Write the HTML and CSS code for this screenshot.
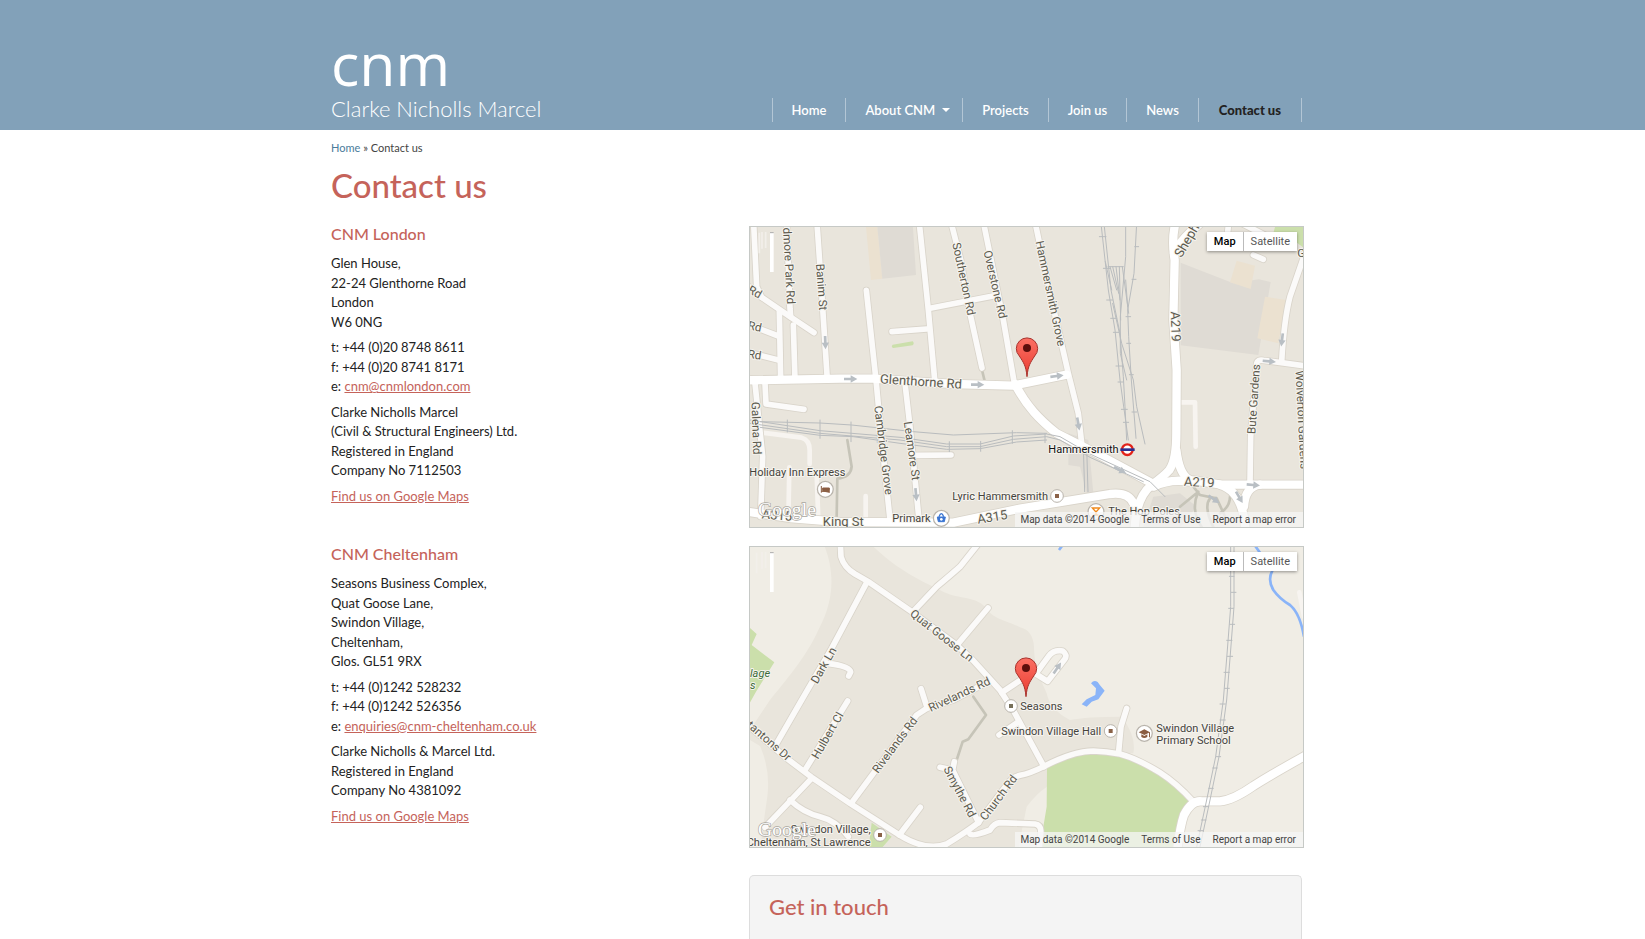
FILE: index.html
```html
<!DOCTYPE html>
<html lang="en">
<head>
<meta charset="utf-8">
<title>Contact us - Clarke Nicholls Marcel</title>
<link rel="stylesheet" href="styles.css">
</head>
<body>
<header class="site-header">
  <div class="container header-row">
    <a class="logo" href="#"><span class="logo-mark">cnm</span><span class="logo-name">Clarke Nicholls Marcel</span></a>
    <nav class="main-nav">
      <a href="#">Home</a>
      <a class="has-menu" href="#">About CNM</a>
      <a href="#">Projects</a>
      <a href="#">Join us</a>
      <a href="#">News</a>
      <a class="current" href="#">Contact us</a>
    </nav>
  </div>
</header>
<main class="container">
  <p class="breadcrumb"><a href="#">Home</a> » Contact us</p>
  <h1>Contact us</h1>

  <section class="office">
    <div class="office-details">
      <h2>CNM London</h2>
      <p>Glen House,<br>22-24 Glenthorne Road<br>London<br>W6 0NG</p>
      <p>t: +44 (0)20 8748 8611<br>f: +44 (0)20 8741 8171<br>e: <a href="#">cnm@cnmlondon.com</a></p>
      <p>Clarke Nicholls Marcel<br>(Civil &amp; Structural Engineers) Ltd.<br>Registered in England<br>Company No 7112503</p>
      <p><a href="#">Find us on Google Maps</a></p>
    </div>
    <div class="map">
      <svg class="map-canvas" viewBox="30 21 1659 900" preserveAspectRatio="xMidYMid slice">
        <defs>
          <linearGradient id="pin-fill" x1="0" y1="0" x2="0" y2="1"><stop offset="0" stop-color="#fb7064"/><stop offset="1" stop-color="#ea3c31"/></linearGradient>
          <g id="pin"><path d="M0,0C-3,-34-11,-43-23,-62A32,32 0 1 1 23,-62C11,-43 3,-34 0,0Z" fill="url(#pin-fill)" stroke="#a8302a" stroke-width="3"/><circle cy="-86" r="12" fill="#5c0e0c"/></g>
          <path id="arrow" d="M-20,-4H0V-11L20,0L0,11V4H-20Z" fill="#b9bfc4"/>
          <g id="poi"><circle r="19" fill="#fff" stroke="#b9b4ac" stroke-width="3"/></g>
          <g id="l-minor">
            <path d="M41,10L50,200L65,232L150,290L222,338"/><path d="M20,195L65,232"/>
            <path d="M20,312L115,348M20,396L115,420"/>
            <path d="M118,275L122,480"/><path d="M140,10L150,265L152,290M160,315L165,480"/>
            <path d="M231,10L240,140L262,480"/>
            <path d="M379,211L408,480L424,650L450,900"/>
            <path d="M538,10L565,270L585,490"/><path d="M456,335L560,327M570,265L770,226"/>
            <path d="M634,10L662,120L690,280L726,444"/>
            <path d="M731,10L790,300L823,490"/>
            <path d="M886,10L930,220L985,460L1015,580L1025,670"/>
            <path d="M45,490L68,710L62,890"/><path d="M75,490L78,552L192,568"/>
            <path d="M495,490L510,620L537,900M530,706L633,705"/>
            <path d="M1530,790L1532,650L1550,430Q1552,418 1570,421L1700,438"/>
            <path d="M1700,85L1650,230Q1632,300 1625,425"/>
            <path d="M1466,10L1460,60M1505,10L1580,48M1540,105L1570,118"/>
          </g>
          <g id="l-major">
            <path d="M20,481L300,476L400,476L640,492L820,497L980,464"/>
            <path d="M825,492C860,560 900,600 950,640L1080,706L1240,792"/>
            <path d="M1306,10Q1294,60 1304,120L1300,300L1310,450L1309,640Q1309,720 1288,750Q1270,770 1235,795Q1190,830 1184,921"/>
            <path d="M1302,100Q1320,60 1380,10"/>
            <path d="M1309,690Q1318,765 1350,780L1445,794H1700"/>
            <path d="M1240,800Q1290,775 1350,785M1440,794Q1510,815 1516,930M1560,794Q1515,800 1512,860"/>
            <path d="M20,875L150,894L300,906L640,908L840,866L1110,822Q1165,815 1180,850"/>
          </g>
        </defs>
        <rect class="ground" x="0" y="0" width="1720" height="940"/>
        <path class="sand" d="M377,10H411L427,176L393,180Z"/><path class="block" d="M411,10H518L528,165L427,176Z"/>
        <path class="block" d="M1322,128L1480,190L1556,178L1592,186L1555,405L1322,376Z"/>
        <path class="sand" d="M1490,122L1545,137L1532,207L1470,187ZM1575,230L1638,240L1615,370L1552,355Z"/>
        <path class="park" d="M1605,21H1700V90L1660,60L1600,40Z"/><path class="park" d="M458,374L518,364Q524,370 518,376L460,384Q452,380 458,374Z"/>
        <path class="block" d="M985,640L1045,660L1060,820H1040L1020,740L985,735ZM1240,830L1320,820L1370,860L1320,921H1210Z"/>
        <g class="track"><path d="M726,450L738,500M322,660L335,740Q332,772 292,776L290,890"/><path d="M1320,860L1375,815Q1350,870 1385,921M1360,800L1380,825L1430,835L1460,900M1410,835Q1390,860 1420,921M1470,830Q1470,860 1440,880"/></g>
        <g class="lane"><path d="M60,637L185,653Q209,660 209,690V732M148,742L145,900M230,762L235,900M377,828V900M1322,547H1365L1367,680"/></g>
        <use href="#l-minor" class="minor-edge"/><use href="#l-major" class="major-edge"/>
        <use href="#l-minor" class="minor"/><use href="#l-major" class="major"/>
        <g class="rail">
          <path d="M60,605L240,609L335,615L520,635L640,645L830,638L920,640"/>
          <path d="M30,600L240,632L480,652L620,672L720,672L820,648L920,642L960,650L1050,702L1230,785L1275,830"/>
          <path d="M30,610L240,640L480,660L620,680L720,680L820,658L920,650L960,660L1050,712L1210,785"/>
          <path d="M60,622L240,646L340,650L480,670L620,688L720,686L830,666L920,660"/>
          <path d="M142,600V636M240,600V655M333,606V665M412,640V668M628,665V695M722,664V694M817,632V670M915,640V668"/>
          <path d="M1083,10L1105,210L1125,330L1140,480L1165,660M1092,10L1113,210L1140,340L1150,470L1155,560L1160,660"/>
          <path d="M1157,10V110L1141,290L1141,400L1160,480M1190,10L1182,160L1163,270L1166,350L1174,480L1188,655"/>
          <path d="M1096,125L1115,210M1104,140H1150M1110,140L1130,210M1118,140L1136,220M1128,140L1140,240M1138,140L1142,300M1147,140L1166,280"/>
          <path d="M1118,250L1145,370L1180,480L1190,560L1215,672M1157,180L1163,260M1030,680L1034,815M1040,680L1044,815"/>
          <path d="M1078,50H1098M1090,145H1112M1100,240H1118M1112,295H1130M1120,337H1136M1128,438H1146M1134,486H1150M1144,568H1162M1150,607H1166M1184,80H1196M1176,178H1188M1158,290H1172M1160,370H1172M1168,464H1180M1176,576H1190"/>
        </g>
        <use href="#arrow" transform="translate(332,477)"/><use href="#arrow" transform="translate(713,494)"/><use href="#arrow" transform="translate(951,468) rotate(-7)"/>
        <use href="#arrow" transform="translate(256,368) rotate(88)"/><use href="#arrow" transform="translate(528,824) rotate(85)"/><use href="#arrow" transform="translate(1015,612) rotate(80)"/>
        <use href="#arrow" transform="translate(1140,750) rotate(27)"/><use href="#arrow" transform="translate(1626,360) rotate(97)"/><use href="#arrow" transform="translate(1588,424) rotate(5)"/>
        <use href="#arrow" transform="translate(1540,795) rotate(5)"/><use href="#arrow" transform="translate(1498,832) rotate(60)"/><use href="#arrow" transform="translate(1422,838) rotate(35)"/>
        <g class="street">
          <text transform="translate(135,138) rotate(87)">dmore Park Rd</text>
          <text transform="translate(233,202) rotate(86)">Banim St</text>
          <text transform="translate(660,179) rotate(78)">Southerton Rd</text>
          <text transform="translate(754,196) rotate(77)">Overstone Rd</text>
          <text transform="translate(920,223) rotate(78)">Hammersmith Grove</text>
          <text class="route" transform="translate(1294,320) rotate(88)">A219</text>
          <text class="route" transform="translate(1352,68) rotate(-60)">Sheph</text>
          <text class="route" transform="translate(542,498) rotate(4)">Glenthorne Rd</text>
          <text transform="translate(419,692) rotate(83)">Cambridge Grove</text>
          <text transform="translate(504,694) rotate(82)">Leamore St</text>
          <text transform="translate(37,625) rotate(88)">Galena Rd</text>
          <text transform="translate(39,226) rotate(30)">Rd</text>
          <text transform="translate(42,331) rotate(12)">Rd</text>
          <text transform="translate(42,416) rotate(8)">Rd</text>
          <text transform="translate(1553,538) rotate(-86)">Bute Gardens</text>
          <text transform="translate(1674,600) rotate(87)">Wolverton Gardens</text>
          <text class="route" transform="translate(1377,800) rotate(3)">A219</text>
          <text class="route" transform="translate(759,904) rotate(-9)">A315</text>
          <text class="route" transform="translate(110,899) rotate(4)">A315</text>
          <text class="route" transform="translate(310,917)">King St</text>
          <text transform="translate(1590,65) rotate(20)">B</text><text transform="translate(1684,112)">G</text>
        </g>
        <g class="place">
          <text x="28" y="767">Holiday Inn Express</text><text x="457" y="905">Primark</text>
          <text x="637" y="840">Lyric Hammersmith</text><text x="1105" y="884">The Hop Poles</text>
          <text class="station" x="925" y="700">Hammersmith</text>
        </g>
        <use href="#poi" transform="translate(256,808) scale(1.25)"/><path d="M244,798V818M244,814H268V818M248,804H268V812H248Z" fill="#8a5d42" stroke="#8a5d42" stroke-width="3"/>
        <use href="#poi" transform="translate(604,895) scale(1.25)"/><path d="M592,891H616L613,905H595Z" fill="#3c76d2" stroke="#3c76d2" stroke-width="3"/><path d="M597,890Q604,872 611,890" fill="none" stroke="#3c76d2" stroke-width="4"/><circle cx="604" cy="898" r="4" fill="#fff"/>
        <use href="#poi" transform="translate(951,828)"/><path d="M945,822H957V834H945Z" fill="#8a6248"/>
        <use href="#poi" transform="translate(1068,875) scale(1.25)"/><path d="M1057,864H1079L1068,876ZM1068,876V885M1061,885H1075" fill="none" stroke="#f08a1c" stroke-width="4"/>
        <circle cx="1162" cy="689" r="16" fill="#fff" stroke="#e2231a" stroke-width="7"/><path d="M1141,685H1184V693H1141Z" fill="#2b2f8f"/>
        <use href="#pin" transform="translate(861,470)"/>
        <g class="zoom-bar"><path class="zoom-ghost" d="M58,38V100M66,36V86M77,36V84"/><path d="M90,38H101V156H90Z"/><path class="zoom-cap" d="M90,38H101"/></g>
        <text class="google" x="54" y="888">Google</text>
      </svg>
      <div class="map-type"><button type="button" class="active">Map</button><button type="button">Satellite</button></div>
      <div class="map-credit"><span>Map data ©2014 Google</span><a href="#">Terms of Use</a><a href="#">Report a map error</a></div>
    </div>
  </section>

  <section class="office">
    <div class="office-details">
      <h2>CNM Cheltenham</h2>
      <p>Seasons Business Complex,<br>Quat Goose Lane,<br>Swindon Village,<br>Cheltenham,<br>Glos. GL51 9RX</p>
      <p>t: +44 (0)1242 528232<br>f: +44 (0)1242 526356<br>e: <a href="#">enquiries@cnm-cheltenham.co.uk</a></p>
      <p>Clarke Nicholls &amp; Marcel Ltd.<br>Registered in England<br>Company No 4381092</p>
      <p><a href="#">Find us on Google Maps</a></p>
    </div>
    <div class="map">
      <svg class="map-canvas" viewBox="30 21 1659 900" preserveAspectRatio="xMidYMid slice">
        <defs>
          <g id="c-minor">
            <path d="M301,10L303,50Q312,82 345,102L385,125L515,215L650,315L700,362L780,450L822,515L912,680"/>
            <path d="M716,10L660,80Q640,98 590,140L522,212M744,204L655,310"/>
            <path d="M380,128L275,325L185,480L110,610"/><path d="M262,370Q330,378 332,396L326,408"/>
            <path d="M323,483L195,690"/>
            <path d="M20,552L140,655L215,712L330,790L480,886Q560,935 620,912Q680,875 715,848L800,735Q815,712 840,706Q870,700 910,680Q1000,633 1060,633Q1100,634 1140,642Q1190,655 1260,698Q1310,730 1360,785"/>
            <path d="M212,718L75,862M150,780Q190,818 240,830Q290,842 325,890"/>
            <path d="M335,788L530,525L560,505L640,480L745,425M543,446L562,505M478,885L541,802"/>
            <path d="M600,682L638,690L716,848M638,690L643,665"/>
            <path d="M690,882Q700,890 750,870Q762,850 780,848L885,852Q905,855 902,880L897,930"/>
            <path d="M785,458L845,418M890,398L925,350Q940,328 968,333Q984,345 974,358L923,424L888,402"/>
            <path d="M777,585L833,547M1160,505L1143,560L1136,635"/>
          </g>
          <g id="c-major"><path d="M1700,645Q1600,700 1540,738Q1480,780 1440,784H1385Q1355,780 1332,825Q1320,860 1312,930"/></g>
        </defs>
        <rect class="field" x="0" y="0" width="1720" height="940"/>
        <path class="ground" d="M250,10C280,80 290,170 235,270C200,350 130,430 90,480L30,570V600L60,618Q92,690 82,770Q70,850 60,930H835Q845,870 860,800Q890,760 921,740L1100,640H1180Q1190,590 1145,530Q1040,530 990,540Q930,510 920,460Q880,380 882,320Q878,270 840,262C800,240 760,240 735,200C700,165 650,180 600,150C540,120 470,90 390,10Z"/>
        <path class="park" d="M921,685C1000,640 1040,635 1060,636L1130,645C1230,680 1300,730 1355,785C1330,800 1310,860 1300,930H905L910,860L920,800Z"/>
        <path class="park" d="M20,255L50,282L35,315L103,367L48,455L20,505ZM395,848L455,890L420,930H385Z"/>
        <path class="water" d="M1053,430Q1062,418 1073,426L1080,436L1094,452L1075,478L1055,485L1040,500L1025,493L1040,478L1066,465L1068,445Z"/>
        <path class="river" d="M1540,10L1560,38L1597,92Q1582,120 1600,150Q1618,176 1650,195Q1680,220 1692,290M966,18L957,30"/>
        <path class="track" d="M650,660L668,605L685,598L738,525L700,470"/>
        <path class="lane" d="M1678,157L1692,230"/>
        <use href="#c-minor" class="minor-edge"/><use href="#c-major" class="major-edge"/>
        <use href="#c-minor" class="minor"/><use href="#c-major" class="major"/>
        <g class="rail"><path d="M1472,10V200L1462,330L1450,480L1427,650L1400,780L1368,930M1482,10V200L1472,330L1460,480L1437,650L1410,780L1378,930"/>
          <path d="M1468,109H1482M1474,157H1488M1466,205H1480M1470,253H1484M1460,301H1476M1462,349H1478M1452,397H1468M1454,445H1468M1440,492H1456M1440,540H1456M1430,600H1446M1428,650H1442M1418,684H1432M1406,745H1420M1390,800H1406M1384,840H1398M1374,872H1390"/></g>
        <use href="#arrow" transform="translate(952,384) rotate(-56)"/>
        <g class="street">
          <text transform="translate(261,382) rotate(-60)">Dark Ln</text>
          <text transform="translate(598,296) rotate(38)">Quat Goose Ln</text>
          <text transform="translate(663,474) rotate(-25)">Rivelands Rd</text>
          <text transform="translate(474,622) rotate(-53)">Rivelands Rd</text>
          <text transform="translate(273,592) rotate(-60)">Hulbert Cl</text>
          <text transform="translate(80,612) rotate(41)">tantons Dr</text>
          <text transform="translate(649,761) rotate(62)">Smythe Rd</text>
          <text transform="translate(785,780) rotate(-53)">Church Rd</text>
        </g>
        <g class="green-label"><text x="30" y="410">lage</text><text x="30" y="447">s</text></g>
        <g class="place">
          <text x="841" y="510">Seasons</text><text x="784" y="585">Swindon Village Hall</text>
          <text x="1249" y="575">Swindon Village</text><text x="1249" y="611">Primary School</text>
          <text class="end" x="392" y="878">Swindon Village,</text><text class="end" x="392" y="917">Cheltenham, St Lawrence</text>
        </g>
        <use href="#poi" transform="translate(813,498)"/><path d="M807,492H819V504H807Z" fill="#77705a"/>
        <use href="#poi" transform="translate(1112,573)"/><path d="M1106,567H1118V579H1106Z" fill="#8a6248"/>
        <use href="#poi" transform="translate(420,885)"/><path d="M414,879H426V891H414Z" fill="#8a6248"/>
        <use href="#poi" transform="translate(1213,580) scale(1.25)"/><path d="M1196,577L1213,568L1230,577L1213,585ZM1204,583V591Q1213,597 1222,591V583L1213,588ZM1227,578V592H1230V577Z" fill="#8a5d42"/>
        <use href="#pin" transform="translate(858,470)"/>
        <g class="zoom-bar"><path class="zoom-ghost" d="M50,38V100M66,36V86M77,36V84"/><path d="M90,38H101V156H90Z"/><path class="zoom-cap" d="M90,38H101"/></g>
        <text class="google" x="54" y="888">Google</text>
      </svg>
      <div class="map-type"><button type="button" class="active">Map</button><button type="button">Satellite</button></div>
      <div class="map-credit"><span>Map data ©2014 Google</span><a href="#">Terms of Use</a><a href="#">Report a map error</a></div>
    </div>
  </section>

  <section class="enquiry"><h2>Get in touch</h2></section>
</main>
</body>
</html>
```
FILE: styles.css
```css
* { box-sizing: border-box; }
body { margin: 0; background: #fff; color: #222; font: 13px/1.5 Lato, sans-serif; }
p, h1, h2 { margin: 0; }
.container { max-width: 983px; margin: 0 auto; padding-right: 12px; }

.site-header { background: #82a1b9; }
.header-row { display: flex; justify-content: space-between; align-items: flex-end; height: 130px; padding-bottom: 8px; }
.logo { display: flex; flex-direction: column; color: #fff; text-decoration: none; }
.logo-mark { font: 500 59px/66px "Open Sans", sans-serif; }
.logo-name { font: 300 22px/26px Lato, sans-serif; }
.main-nav { display: flex; border-left: 1px solid #b3c6d5; }
.main-nav a { padding: 0 19px; border-right: 1px solid #b3c6d5; color: #fff; font-weight: 600; line-height: 24px; text-decoration: none; }
.main-nav .has-menu { padding-right: 12px; }
.main-nav .has-menu::after { content: ""; display: inline-block; margin-left: 7px; vertical-align: 3px; border: 4px solid transparent; border-top-color: #fff; border-bottom: 0; }
.main-nav .current { padding: 0 20px; color: #222; font-weight: 900; }

.breadcrumb { padding-top: 10px; font-size: 11px; line-height: 16px; color: #444; }
.breadcrumb a { color: #4a7c9b; text-decoration: none; }
h1 { margin: 7px 0 19px; color: #c5635a; font-size: 33px; font-weight: 500; line-height: 44px; }
h2 { color: #c5635a; font-weight: 500; }

.office { display: grid; grid-template-columns: 418px minmax(0, 1fr); margin-bottom: 18px; }
.office-details h2 { margin-bottom: 12px; font-size: 16px; line-height: 16px; }
.office-details p { margin-bottom: 6px; }
.office-details a { color: #c5635a; }

.map { position: relative; box-sizing: content-box; width: 100%; height: 300px; border: 1px solid #c6c9c6; overflow: hidden; font-family: Roboto, sans-serif; }
.map-canvas { display: block; width: 100%; height: 100%; }
.map-type { position: absolute; top: 5px; right: 6px; display: flex; box-shadow: 0 1px 3px rgba(0, 0, 0, .4); }
.map-type button { height: 19px; padding: 0 7px; border: 0; background: #fff; color: #565656; font: 11px/19px Roboto, sans-serif; }
.map-type .active { border-right: 1px solid #bbb; color: #000; font-weight: 500; }
.map-credit { position: absolute; right: 0; bottom: 0; display: flex; gap: 12px; padding: 0 7px 0 5px; background: rgba(245, 245, 245, .75); color: #444; font-size: 10px; line-height: 15px; }
.map-credit a { color: inherit; text-decoration: none; }

.ground { fill: #e9e5dc; }
.field { fill: #f0ede5; }
.block { fill: #dfdbd4; }
.sand { fill: #ebe1d0; }
.park { fill: #cbdfab; }
.water { fill: #8ab4f8; }
.river { fill: none; stroke: #8ab4f8; stroke-width: 8px; }
.minor, .major, .minor-edge, .major-edge, .lane, .track, .rail { fill: none; stroke-linecap: round; stroke-linejoin: round; }
.minor-edge { stroke: #d9d4ca; stroke-width: 22px; }
.minor { stroke: #fbfaf9; stroke-width: 17px; }
.major-edge { stroke: #d9d4ca; stroke-width: 30px; }
.major { stroke: #fff; stroke-width: 25px; }
.lane { stroke: #f7f4f0; stroke-width: 14px; }
.track { stroke: #c6c4b8; stroke-width: 8px; }
.rail { stroke: #b9bcbe; stroke-width: 3px; }
.street text, .place text, .green-label text { paint-order: stroke; stroke: #f6f4ef; stroke-width: 6px; stroke-linejoin: round; font-size: 33px; fill: #5c5a4e; }
.street text { text-anchor: middle; font-size: 35px; }
.street .route { font-size: 39px; }
.place text { fill: #45433c; }
.place .station { fill: #111; }
.place .end { text-anchor: end; }
.green-label text { fill: #3c6b38; font-style: italic; }
.zoom-bar { fill: #fff; }
.zoom-ghost { stroke: #f2efea; stroke-width: 5px; }
.zoom-cap { stroke: #aaa; stroke-width: 3px; }
.google { paint-order: stroke; stroke: #aaa79f; stroke-width: 4px; fill: #fff; font: 59px "Liberation Serif", serif; }

.enquiry { margin: 27px 0 0 418px; padding: 16px 19px 17px; border: 1px solid #ddd; border-bottom: 0; border-radius: 5px 5px 0 0; background: #f4f4f4; }
.enquiry h2 { font-size: 22px; line-height: 30px; }
```
